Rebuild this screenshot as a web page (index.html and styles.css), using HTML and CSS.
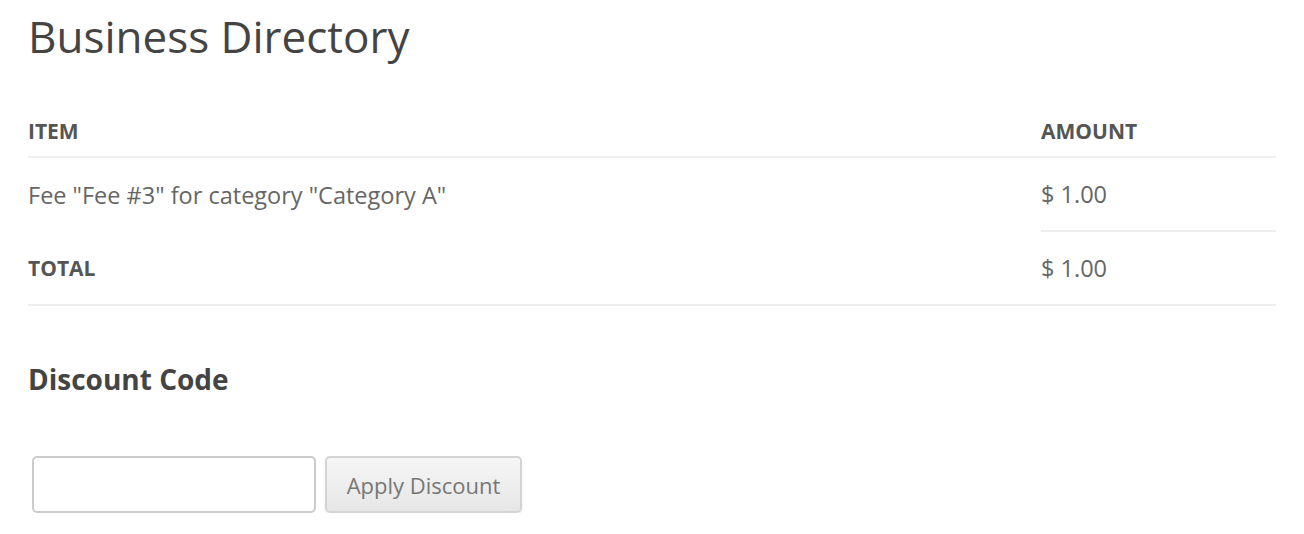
FILE: index.html
```html
<!DOCTYPE html>
<html lang="en">
<head>
    <meta charset="UTF-8">
    <meta name="viewport" content="width=device-width, initial-scale=1.0">
    <title>Business Directory</title>
    <link rel="stylesheet" href="styles.css">
</head>
<body>
    <div class="page">
        <h1 class="page-title">Business Directory</h1>
        <table class="summary">
            <thead>
                <tr>
                    <th class="col-item">Item</th>
                    <th class="col-amount">Amount</th>
                </tr>
            </thead>
            <tbody>
                <tr class="fee-row">
                    <td class="col-item">Fee "Fee #3" for category "Category A"</td>
                    <td class="col-amount">$ 1.00</td>
                </tr>
                <tr class="total-row">
                    <th class="col-item">Total</th>
                    <td class="col-amount">$ 1.00</td>
                </tr>
            </tbody>
        </table>
        <h3 class="discount-title">Discount Code</h3>
        <form class="discount-form">
            <input type="text" class="discount-input">
            <button type="submit" class="discount-button">Apply Discount</button>
        </form>
    </div>
</body>
</html>
```

FILE: styles.css
```css
body {
    font-family: "Open Sans", Arial, sans-serif;
    margin: 0;
    padding: 0;
    background-color: #fff;
    color: #666;
}
.page {
    padding: 0 28px;
}
.page-title {
    font-size: 44px;
    font-weight: 400;
    line-height: 60px;
    margin: 6px 0 40px;
    color: #444;
}
.summary {
    width: 100%;
    border-collapse: collapse;
}
.summary th,
.summary td {
    text-align: left;
    padding: 0;
    line-height: 30px;
    font-size: 23.5px;
}
.summary th {
    font-size: 21px;
    font-weight: 700;
    text-transform: uppercase;
    color: #555;
}
.summary thead th {
    padding: 10px 0 10px;
    border-bottom: 2px solid #eee;
}
.col-amount {
    width: 235px;
}
.fee-row td {
    padding: 21px 0;
}
.fee-row .col-amount {
    border-bottom: 2px solid #eee;
}
.total-row th,
.total-row td {
    padding: 21px 0;
    border-bottom: 2px solid #eee;
}
.discount-title {
    font-size: 28px;
    font-weight: 700;
    color: #444;
    margin: 53px 0 0;
    line-height: 40px;
}
.discount-form {
    display: flex;
    gap: 9px;
    margin: 57px 0 0 4px;
}
.discount-input {
    width: 284px;
    height: 57px;
    box-sizing: border-box;
    border: 2px solid #ccc;
    border-radius: 5px;
    background: #fff;
}
.discount-button {
    width: 197px;
    height: 57px;
    box-sizing: border-box;
    font-family: "Open Sans", Arial, sans-serif;
    font-size: 22px;
    color: #777;
    border: 2px solid #d4d4d4;
    border-radius: 5px;
    background: linear-gradient(#f6f6f6, #e6e6e6);
    box-shadow: 0 1px 2px rgba(0, 0, 0, 0.1);
    cursor: pointer;
}
```
